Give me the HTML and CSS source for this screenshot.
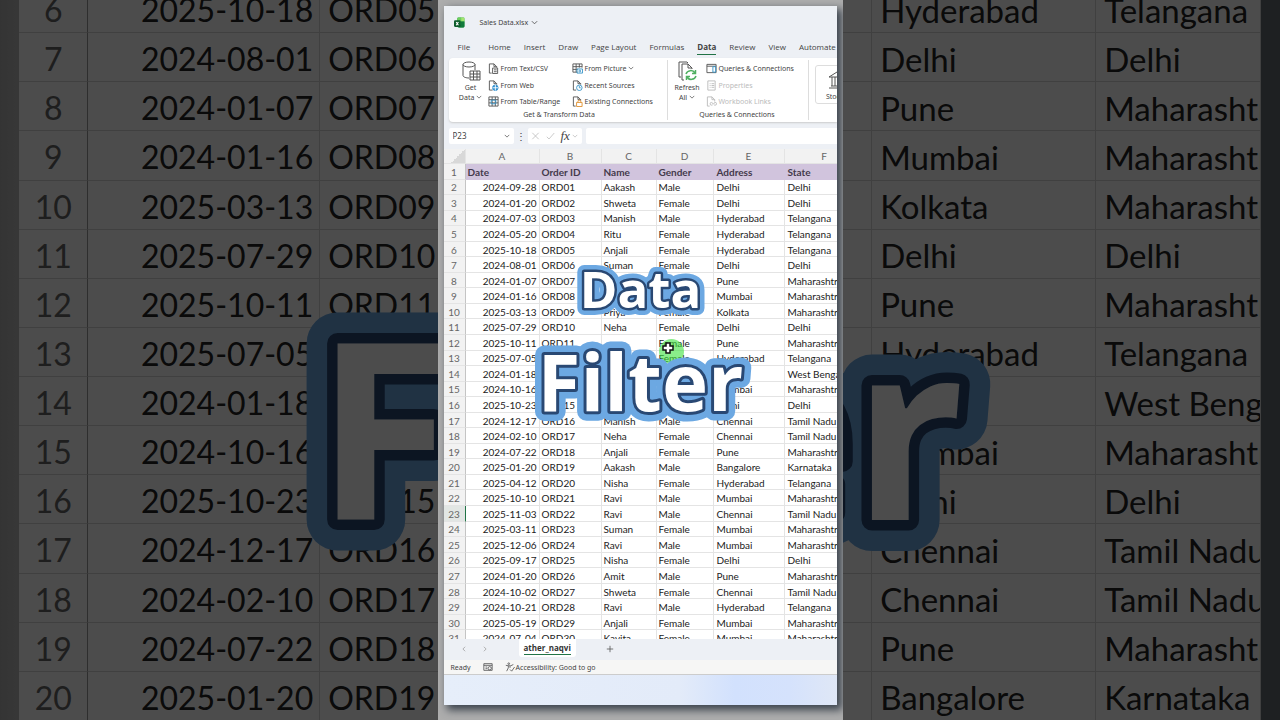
FILE: index.html
```html
<!DOCTYPE html>
<html lang="en">
<head>
    <meta charset="UTF-8">
    <meta name="viewport" content="width=device-width, initial-scale=1.0">
    <title>Data Filter</title>
    <link rel="stylesheet" href="styles.css">
</head>
<body>
    <!-- Dark enlarged sheet behind the video -->
    <div class="backdrop" aria-hidden="true">
        <table class="sheet sheet-big">
            <colgroup><col class="c-num"><col class="c-a"><col class="c-b"><col class="c-c"><col class="c-d"><col class="c-e"><col></colgroup>
            <tbody id="bigRows"></tbody>
        </table>
        <svg class="title title-big">
            <defs><text id="big" x="50%" y="221">Filter</text></defs>
            <use href="#big" class="outer"/>
            <use href="#big" class="inner"/>
        </svg>
        <div class="shade"></div>
    </div>

    <main class="video">
        <div class="window">
            <!-- Title bar -->
            <header class="titlebar">
                <svg class="logo" viewBox="0 0 20 20"><rect x="6" y="1" width="13" height="18" rx="2" fill="#2fa84f"/><path d="M6 3a2 2 0 0 1 2-2h5v7H6z" fill="#6fce5d"/><path d="M13 1h4a2 2 0 0 1 2 2v5h-6z" fill="#a4e56f"/><path d="M12 8h7v9a2 2 0 0 1-2 2H8l4-5z" fill="#127a3b"/><rect x="0" y="6" width="12" height="12" rx="2" fill="#0d5c2c"/><path d="M4 9l4 6M8 9l-4 6" stroke="#fff" stroke-width="2"/></svg>
                <button class="filename">Sales Data.xlsx <svg class="chev" viewBox="0 0 8 8"><path d="M1 2.500l3 3 3-3"/></svg></button>
            </header>

            <nav class="tabs">
                <a href="#">File</a>
                <a href="#">Home</a>
                <a href="#">Insert</a>
                <a href="#">Draw</a>
                <a href="#">Page Layout</a>
                <a href="#">Formulas</a>
                <a href="#" class="active">Data</a>
                <a href="#">Review</a>
                <a href="#">View</a>
                <a href="#">Automate</a>
            </nav>

            <!-- Ribbon -->
            <section class="ribbon">
                <div class="group group-get">
                    <div class="tools">
                        <button class="big">
                            <svg viewBox="0 0 20 20"><path d="M2 3.500v11C2 16 5 17 8 17M14 3.500V9" /><ellipse cx="8" cy="3.500" rx="6" ry="2.500"/><path d="M9 10h10v9H9zM9 13h10M9 16h10M12.500 10v9M16 10v9"/></svg>
                            <span>Get</span>
                            <span>Data <svg class="chev" viewBox="0 0 8 8"><path d="M1 2.500l3 3 3-3"/></svg></span>
                        </button>
                        <div class="list list-a">
                            <button><svg viewBox="0 0 12 12"><path d="M4 11H1.500V1h5l3 3v1M6.500 1v3h3"/><path d="M5 5.500h5.500v6H5zM6.500 7.500h3M6.500 9.500h3"/></svg>From Text/CSV</button>
                            <button><svg viewBox="0 0 12 12"><path d="M5 11H1.500V1h5l3 3v1M6.500 1v3h3"/><circle cx="8" cy="8.500" r="3" class="blue-fill"/><path d="M5 8.500h6M8 5.500v6" class="white"/></svg>From Web</button>
                            <button><svg viewBox="0 0 12 12"><path d="M1 1h10v10H1zM1 4h10M1 7.500h10M4.500 1v10M8 1v10"/><path d="M3.500 4.500h5v4h-5z" class="blue"/></svg>From Table/Range</button>
                        </div>
                        <div class="list list-b">
                            <button><svg viewBox="0 0 12 12"><path d="M6 10H1V1h10v4M1 4h10M1 7h5M4.500 1v9M8 1v4"/><path d="M5.500 6.500h6v4.500h-6z" class="blue"/><circle cx="8.500" cy="8.800" r="1" class="blue"/></svg>From Picture <svg class="chev" viewBox="0 0 8 8"><path d="M1 2.500l3 3 3-3"/></svg></button>
                            <button><svg viewBox="0 0 12 12"><path d="M4.500 11H1.500V1h5l3 3v1M6.500 1v3h3"/><circle cx="8" cy="8.500" r="3" class="blue"/><path d="M8 6.500v2h1.500" class="blue"/></svg>Recent Sources</button>
                            <button><svg viewBox="0 0 12 12"><path d="M4 11H1.500V1h5l3 3v1M6.500 1v3h3"/><path d="M5 7h6v4.500H5zM6.500 7V6a1.500 1.500 0 0 1 3 0v1" class="orange"/></svg>Existing Connections</button>
                        </div>
                    </div>
                    <div class="caption">Get &amp; Transform Data</div>
                </div>
                <div class="group group-queries">
                    <div class="tools">
                        <button class="big">
                            <svg viewBox="0 0 20 20"><path d="M4 16H2V1h8l1 1M7 19H5V3h6l4 4v1M11 3v4h4"/><path d="M9 13a5 5 0 0 1 9-1M18.500 9v3.500H15M19 15a5 5 0 0 1-9 1M9.500 19v-3.500H13" class="green"/></svg>
                            <span>Refresh</span>
                            <span>All <svg class="chev" viewBox="0 0 8 8"><path d="M1 2.500l3 3 3-3"/></svg></span>
                        </button>
                        <div class="list">
                            <button><svg viewBox="0 0 12 12"><path d="M1 1.500h10v9H1zM1 3.500h10"/><path d="M7.500 4h3v6h-3z" class="blue"/></svg>Queries &amp; Connections</button>
                            <button disabled><svg viewBox="0 0 12 12"><path d="M2 1h8v10H2zM4 4h1M6 4h3M4 6h1M6 6h3M4 8h1M6 8h3"/></svg>Properties</button>
                            <button disabled><svg viewBox="0 0 12 12"><path d="M4 11H1.500V1h5l3 3v2M6.500 1v3h3"/><path d="M7 7H6a1.500 1.500 0 0 0 0 3h1M9 7h1a1.500 1.500 0 0 1 0 3H9M6.500 8.500h3"/></svg>Workbook Links</button>
                        </div>
                    </div>
                    <div class="caption">Queries &amp; Connections</div>
                </div>
                <div class="group group-types">
                    <button class="big card">
                        <svg viewBox="0 0 20 20"><path d="M2 7l8-5 8 5zM2 18h16M4 16h12M5 7v9M8 7v9M12 7v9M15 7v9"/></svg>
                        <span>Stocks</span>
                    </button>
                </div>
            </section>

            <!-- Formula bar -->
            <div class="formula-bar">
                <div class="name-box">
                    <input type="text" value="P23" aria-label="Name box">
                    <svg class="chev" viewBox="0 0 8 8"><path d="M1 2.500l3 3 3-3"/></svg>
                </div>
                <span class="dots">⋮</span>
                <div class="fx">
                    <svg class="pale" viewBox="0 0 10 10"><path d="M1 1l8 8M9 1L1 9"/></svg>
                    <svg class="pale" viewBox="0 0 12 10"><path d="M1 6l3 3 7-8"/></svg>
                    <i>fx</i>
                    <svg class="chev pale" viewBox="0 0 8 8"><path d="M1 2.500l3 3 3-3"/></svg>
                </div>
                <input type="text" class="formula" aria-label="Formula">
            </div>

            <!-- Sheet -->
            <div class="grid-area">
                <table class="sheet sheet-main">
                    <colgroup><col class="c-num"><col class="c-a"><col class="c-b"><col class="c-c"><col class="c-d"><col class="c-e"><col class="c-f"></colgroup>
                    <thead>
                        <tr><th class="corner"></th><th>A</th><th>B</th><th>C</th><th>D</th><th>E</th><th>F</th></tr>
                    </thead>
                    <tbody id="rows"></tbody>
                </table>
            </div>

            <div class="sheet-tabs">
                <button aria-label="Previous"><svg class="chev" viewBox="0 0 8 8"><path d="M5.500 1l-3 3 3 3"/></svg></button>
                <button aria-label="Next"><svg class="chev" viewBox="0 0 8 8"><path d="M2.500 1l3 3-3 3"/></svg></button>
                <button class="current"><span>ather_naqvi</span></button>
                <button class="add" aria-label="New sheet"><svg viewBox="0 0 10 10"><path d="M5 1v8M1 5h8"/></svg></button>
            </div>
            <footer class="status">
                <span>Ready</span>
                <svg viewBox="0 0 12 12"><path d="M1 2h10v8H1zM1 4h10M3 6h2M3 8h2"/><circle cx="8" cy="7.500" r="2"/></svg>
                <span class="access"><svg viewBox="0 0 12 12"><circle cx="4.500" cy="2" r="1"/><path d="M1 4l3 .5h3L10 3M4 4.500V7l-2 4M6 5v2"/><path d="M6 9l2 2 3.500-5"/></svg>Accessibility: Good to go</span>
            </footer>
            <div class="taskbar"></div>
        </div>

        <div class="spot"></div>
        <svg class="cursor" viewBox="0 0 12 12"><path d="M4 1h4v3h3v4H8v3H4V8H1V4h3z"/></svg>

        <!-- Video caption -->
        <svg class="title title-data">
            <defs><text id="word1" x="50%" y="47">Data</text></defs>
            <use href="#word1" class="outer"/>
            <use href="#word1" class="inner"/>
        </svg>
        <svg class="title title-filter">
            <defs><text id="word2" x="50%" y="70">Filter</text></defs>
            <use href="#word2" class="outer"/>
            <use href="#word2" class="inner"/>
        </svg>
    </main>

    <script src="script.js"></script>
</body>
</html>
```
FILE: styles.css
```css
* {
    box-sizing: border-box;
}
body {
    margin: 0;
    height: 100vh;
    overflow: hidden;
    position: relative;
    display: flex;
    justify-content: center;
    background: #1e2022;
    font-family: "Noto Sans", "Open Sans", sans-serif;
    font-size: 7px;
    color: #444;
}
button, input {
    font: inherit;
    color: inherit;
    background: none;
    border: none;
    padding: 0;
    margin: 0;
}
svg {
    fill: none;
    stroke: #555;
    stroke-width: 1;
    flex: none;
}
.chev {
    width: 6px;
    height: 6px;
}
.blue { stroke: #3a96c8; }
.blue-fill { fill: #2f8fd0; stroke: #2f8fd0; }
.orange { stroke: #e0912f; }
.green { stroke: #4fb061; stroke-width: 1.500; }
.white { stroke: #fff; }

/* Sheet tables */
.sheet {
    border-collapse: separate;
    border-spacing: 0;
    table-layout: fixed;
    width: 100%;
    background: #fff;
    font-family: Lato, sans-serif;
    color: #222;
}
.sheet th, .sheet td {
    padding: 1px 2px 0;
    border-right: 1px solid #e4e4e4;
    border-bottom: 1px solid #e4e4e4;
    text-align: left;
    white-space: nowrap;
    font-weight: normal;
    line-height: 1;
}
.sheet td.date {
    text-align: right;
}
.sheet tbody th {
    text-align: center;
    color: #666;
    background: #f2f2f2;
    border-right-color: #c4c4c4;
}

/* Backdrop */
.backdrop {
    position: absolute;
    inset: 0;
    overflow: hidden;
    display: flex;
    justify-content: center;
    align-items: flex-start;
    background: linear-gradient(90deg, #b0b0b0 0, #bcbcbc 2%, #bcbcbc 50%, #666c72 50%);
}
.sheet-big {
    width: 97%;
    height: 737px;
    margin-top: -16px;
    font-size: 32px;
}
.sheet-big .c-num { width: 69px; }
.sheet-big .c-a { width: 232px; }
.sheet-big .c-b { width: 197px; }
.sheet-big .c-c { width: 173px; }
.sheet-big .c-d { width: 182px; }
.sheet-big .c-e { width: 224px; }
.sheet-big td, .sheet-big th {
    padding: 4px 8px 0;
    overflow: hidden;
    border-color: #d8d8d8;
}
.sheet-big td.date {
    padding-right: 6px;
}
.sheet-big .place {
    font-size: 33px;
}
.sheet-big tbody th {
    background: #fff;
    border-right-color: #999;
}
.shade {
    position: absolute;
    inset: 0;
    background: rgba(0, 0, 0, 0.7);
}

/* Video frame */
.video {
    position: relative;
    height: 100vh;
    aspect-ratio: 9 / 16;
    padding: 6px 6px 15px;
    display: flex;
    background: #adadad;
    overflow: hidden;
}
.window {
    flex: 1;
    min-width: 0;
    display: flex;
    flex-direction: column;
    overflow: hidden;
    background: #edf0f5;
    box-shadow: 4px 4px 8px 1px #3c444e;
}
.titlebar {
    display: flex;
    align-items: center;
    gap: 15px;
    padding: 0 10px;
    height: 32px;
}
.logo {
    width: 11px;
    height: 11px;
    stroke: none;
}
.filename {
    display: flex;
    align-items: center;
    gap: 3px;
}
.filename .chev {
    width: 7px;
    height: 7px;
}

.tabs {
    display: flex;
    gap: 13px;
    height: 20px;
    padding: 2px 0 0 14px;
    font-family: "Open Sans", sans-serif;
    font-size: 8px;
    line-height: 14px;
    white-space: nowrap;
}
.tabs a {
    color: #444;
    text-decoration: none;
    height: 15px;
}
.tabs a:first-child {
    padding-right: 5px;
}
.tabs .active {
    font-weight: bold;
    border-bottom: 1px solid #217346;
}

/* Ribbon */
.ribbon {
    display: flex;
    flex: none;
    height: 64px;
    margin-left: 5px;
    background: #fff;
    border-radius: 4px 0 0 4px;
    box-shadow: 0 1px 2px #ccc;
    overflow: hidden;
    white-space: nowrap;
}
.group {
    flex: none;
    margin: 2px 0;
    border-right: 1px solid #ddd;
    display: flex;
    flex-direction: column;
}
.group-get {
    width: 219px;
    padding-left: 9px;
}
.group-queries {
    width: 141px;
    padding-left: 5px;
}
.tools {
    display: flex;
    height: 50px;
}
.big {
    display: flex;
    flex-direction: column;
    align-items: center;
    width: 26px;
    padding-top: 1px;
    line-height: 10px;
}
.group-queries .big {
    width: 29px;
}
.big > svg {
    width: 20px;
    height: 20px;
    margin-bottom: 2px;
}
.list {
    display: flex;
    flex-direction: column;
    padding-left: 4px;
}
.list-a {
    width: 84px;
}
.list button {
    display: flex;
    align-items: center;
    gap: 2px;
    height: 17px;
}
.list button > svg:first-child {
    width: 11px;
    height: 11px;
}
.list button:disabled {
    color: #bbb;
}
.list button:disabled svg {
    stroke: #bbb;
}
.caption {
    text-align: center;
    line-height: 10px;
    padding-right: 6px;
}
.card {
    width: 44px;
    height: 39px;
    margin: 5px 0 0 6px;
    padding-top: 4px;
    border: 1px solid #ddd;
    border-radius: 3px;
}

/* Formula bar */
.formula-bar {
    display: flex;
    align-items: center;
    flex: none;
    height: 27px;
    padding-left: 5px;
}
.name-box {
    display: flex;
    align-items: center;
    justify-content: space-between;
    width: 65px;
    height: 16px;
    padding: 0 4px;
    background: #fff;
    border-radius: 2px;
    font-size: 8px;
}
.name-box input {
    width: 40px;
}
.dots {
    width: 14px;
    text-align: center;
    font-size: 10px;
}
.fx {
    display: flex;
    align-items: center;
    gap: 6px;
    width: 54px;
    height: 16px;
    padding: 0 3px;
    background: #fff;
    border-radius: 2px;
}
.fx svg {
    width: 9px;
    height: 8px;
}
.fx i {
    font-family: "Liberation Serif", serif;
    font-size: 13px;
}
.pale {
    stroke: #bbb;
}
.fx .chev {
    width: 6px;
    margin-left: -4px;
}
.formula {
    flex: 1;
    height: 16px;
    margin-left: 4px;
    background: #fff;
    border-radius: 2px 0 0 2px;
}

/* Main grid */
.grid-area {
    flex: 1;
    min-height: 0;
    overflow: hidden;
}
.sheet-main {
    width: 421px;
    height: 497px;
    font-size: 10px;
}
.sheet-main .c-num { width: 22px; }
.sheet-main .c-a { width: 74px; }
.sheet-main .c-b { width: 62px; }
.sheet-main .c-c { width: 55px; }
.sheet-main .c-d { width: 57px; }
.sheet-main .c-e { width: 71px; }
.sheet-main .c-f { width: 80px; }
.sheet-main .place {
    padding-left: 3px;
}
.sheet-main thead th {
    height: 15px;
    padding-top: 0;
    text-align: center;
    color: #666;
    background: #f2f2f2;
}
.sheet-main thead .corner {
    background: linear-gradient(135deg, #f2f2f2 60%, #d8d8d8 60%);
}
.sheet-main .head-row td {
    background: #d1c4dd;
    border-color: #d1c4dd;
    font-weight: bold;
    color: #443a4c;
}
.sheet-main tbody .selected {
    background: #e2e6e4;
    border-right-color: #217346;
}

/* Bottom bars */
.sheet-tabs {
    display: flex;
    align-items: center;
    flex: none;
    height: 21px;
    padding-left: 17px;
}
.sheet-tabs button {
    width: 21px;
    text-align: left;
}
.sheet-tabs .chev {
    stroke: #999;
}
.sheet-tabs .current {
    width: auto;
    height: 18px;
    margin: 0 30px 3px 16px;
    padding: 0 5px;
    background: #fff;
    border-radius: 0 0 3px 3px;
    font-family: "Open Sans", sans-serif;
    font-size: 8px;
    font-weight: bold;
    color: #333;
}
.current span {
    display: block;
    border-bottom: 1px solid #217346;
    line-height: 13px;
}
.add svg {
    width: 8px;
    height: 8px;
}
.status {
    display: flex;
    align-items: center;
    gap: 12px;
    flex: none;
    height: 15px;
    padding-left: 7px;
    background: #f6f6f5;
    border-bottom: 1px solid #ccc;
}
.status svg {
    width: 10px;
    height: 10px;
}
.access {
    display: flex;
    align-items: center;
    gap: 1px;
}
.taskbar {
    flex: none;
    height: 30px;
    background: linear-gradient(90deg, #e6eefa 0, #e3ebf9 60%, #d2e1fd 74%, #d5e2fc 88%, #dfe7f6);
}

/* Pointer */
.spot {
    position: absolute;
    left: 221px;
    top: 339px;
    width: 25px;
    height: 25px;
    border-radius: 50%;
    background: rgba(60, 225, 60, 0.6);
}
.cursor {
    position: absolute;
    left: 224px;
    top: 342px;
    width: 12px;
    height: 12px;
    fill: #fff;
    stroke: #111;
    stroke-width: 1.500;
}

/* Outlined captions */
.title {
    position: absolute;
    left: 0;
    width: 100%;
    overflow: visible;
    text-anchor: middle;
    font-family: "Open Sans", sans-serif;
    font-weight: bold;
    stroke-linejoin: round;
    paint-order: stroke fill;
}
.outer {
    fill: #6ca8e2;
    stroke: #6ca8e2;
    stroke-width: 19px;
}
.inner {
    fill: #fff;
    stroke: #294873;
    stroke-width: 6px;
}
.title-data {
    top: 261px;
    height: 52px;
    font-size: 51px;
}
.title-data .outer {
    stroke-width: 14px;
}
.title-data .inner {
    stroke-width: 5px;
}
.title-filter {
    top: 341px;
    height: 78px;
    font-size: 78px;
}
.title-big {
    top: 299px;
    height: 246px;
    font-size: 246px;
}
.title-big .outer {
    stroke-width: 62px;
}
.title-big .inner {
    stroke-width: 21px;
}
```
FILE: script.js
```javascript
// order, name and gender left empty are under the caption
const data = [
    ["2024-09-28", "ORD01", "Aakash", "Male", "Delhi", "Delhi"],
    ["2024-01-20", "ORD02", "Shweta", "Female", "Delhi", "Delhi"],
    ["2024-07-03", "ORD03", "Manish", "Male", "Hyderabad", "Telangana"],
    ["2024-05-20", "ORD04", "Ritu", "Female", "Hyderabad", "Telangana"],
    ["2025-10-18", "ORD05", "Anjali", "Female", "Hyderabad", "Telangana"],
    ["2024-08-01", "ORD06", "Suman", "Female", "Delhi", "Delhi"],
    ["2024-01-07", "ORD07", "", "", "Pune", "Maharashtra"],
    ["2024-01-16", "ORD08", "", "", "Mumbai", "Maharashtra"],
    ["2025-03-13", "ORD09", "Priya", "Female", "Kolkata", "Maharashtra"],
    ["2025-07-29", "ORD10", "Neha", "Female", "Delhi", "Delhi"],
    ["2025-10-11", "ORD11", "", "Female", "Pune", "Maharashtra"],
    ["2025-07-05", "", "", "Female", "Hyderabad", "Telangana"],
    ["2024-01-18", "", "", "", "", "West Bengal"],
    ["2024-10-16", "", "", "", "Mumbai", "Maharashtra"],
    ["2025-10-23", "ORD15", "", "", "Delhi", "Delhi"],
    ["2024-12-17", "ORD16", "Manish", "Male", "Chennai", "Tamil Nadu"],
    ["2024-02-10", "ORD17", "Neha", "Female", "Chennai", "Tamil Nadu"],
    ["2024-07-22", "ORD18", "Anjali", "Female", "Pune", "Maharashtra"],
    ["2025-01-20", "ORD19", "Aakash", "Male", "Bangalore", "Karnataka"],
    ["2025-04-12", "ORD20", "Nisha", "Female", "Hyderabad", "Telangana"],
    ["2025-10-10", "ORD21", "Ravi", "Male", "Mumbai", "Maharashtra"],
    ["2025-11-03", "ORD22", "Ravi", "Male", "Chennai", "Tamil Nadu"],
    ["2025-03-11", "ORD23", "Suman", "Female", "Mumbai", "Maharashtra"],
    ["2025-12-06", "ORD24", "Ravi", "Male", "Mumbai", "Maharashtra"],
    ["2025-09-17", "ORD25", "Nisha", "Female", "Delhi", "Delhi"],
    ["2024-01-20", "ORD26", "Amit", "Male", "Pune", "Maharashtra"],
    ["2024-10-02", "ORD27", "Shweta", "Female", "Chennai", "Tamil Nadu"],
    ["2024-10-21", "ORD28", "Ravi", "Male", "Hyderabad", "Telangana"],
    ["2025-05-19", "ORD29", "Anjali", "Female", "Mumbai", "Maharashtra"],
    ["2024-07-04", "ORD30", "Kavita", "Female", "Mumbai", "Maharashtra"]
];

function makeRow(item, number) {
    const [date, order, name, gender, address, state] = item;
    const cls = number === 23 ? ' class="selected"' : "";
    return `<tr><th${cls}>${number}</th><td class="date">${date}</td><td>${order}</td><td>${name}</td><td>${gender}</td><td class="place">${address}</td><td class="place">${state}</td></tr>`;
}

document.getElementById("rows").innerHTML =
    '<tr class="head-row"><th>1</th><td>Date</td><td>Order ID</td><td>Name</td><td>Gender</td><td class="place">Address</td><td class="place">State</td></tr>' +
    data.map((item, i) => makeRow(item, i + 2)).join("");

// the backdrop shows rows 6 to 20, the video covers its name and gender columns
document.getElementById("bigRows").innerHTML = data.slice(4, 19)
    .map(([date, order, , , address, state], i) => makeRow([date, order, "", "", address, state], i + 6))
    .join("");
```
